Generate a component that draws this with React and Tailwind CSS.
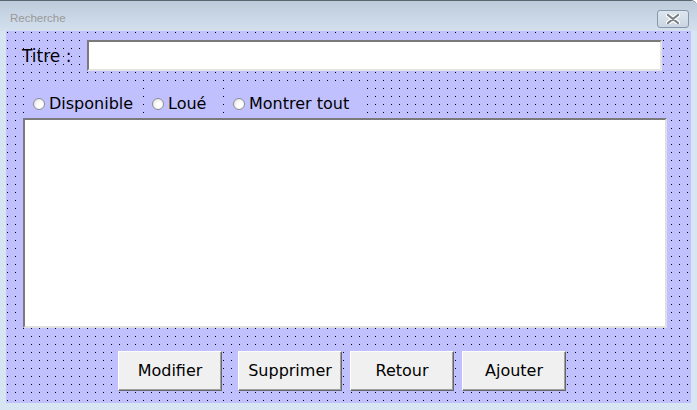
import { useState } from 'react'

const dots =
  'bg-[#c0c0ff] bg-[linear-gradient(to_bottom,transparent_1px,#c0c0ff_1px),linear-gradient(to_right,#000_1px,#c0c0ff_1px)] bg-size-[8px_8px] bg-position-[1px_1px]'

function Radio({ label, checked, onChange, width, className = '' }) {
  return (
    <label
      className={`flex h-[29px] items-center gap-[4px] bg-[#c0c0ff] pt-[3px] pl-[5px] ${className}`}
      style={{ width }}
    >
      <input type="radio" className="sr-only" checked={checked} onChange={onChange} />
      <span className="flex h-[12px] w-[12px] items-center justify-center rounded-full border border-[#8e8f8f] bg-[radial-gradient(circle_at_60%_60%,#ffffff_30%,#d8d8d8_100%)]">
        {checked && <span className="h-[4px] w-[4px] rounded-full bg-[#333]" />}
      </span>
      <span className="text-[16px] leading-none text-black">{label}</span>
    </label>
  )
}

function Btn({ children }) {
  return (
    <button className="h-[40px] w-[104px] border border-t-white border-l-white border-r-[#696969] border-b-[#696969] bg-[#f0f0f0] text-[16px] text-black shadow-[inset_-1px_-1px_0_#a0a0a0]">
      {children}
    </button>
  )
}

export default function App() {
  const [filtre, setFiltre] = useState(null)
  const [titre, setTitre] = useState('')

  return (
    <div
      className="flex h-[410px] w-[697px] flex-col overflow-hidden rounded-tr-[6px] border-t border-[#5a6670] bg-[#d7e4f2]"
      style={{ fontFamily: '"DejaVu Sans", Verdana, sans-serif' }}
    >
      {/* barre de titre */}
      <div className="flex h-[30px] shrink-0 items-start justify-between bg-[linear-gradient(to_bottom,#bccbdb,#d4e0ee)] pl-[10px] pr-[8px]">
        <span
          className="pt-[12px] text-[11.5px] leading-none text-[#9a9a9a]"
          style={{ fontFamily: '"Liberation Sans", Arial, sans-serif' }}
        >
          Recherche
        </span>
        <div className="mt-[9px] flex h-[18px] w-[32px] items-center justify-center rounded-[3px] border border-[#8797a8] bg-[linear-gradient(to_bottom,#dde6ef,#c9d5e2)]">
          <svg width="14" height="10" viewBox="0 0 14 10">
            <path d="M2 1 L12 9 M12 1 L2 9" stroke="#ffffff" strokeWidth="4.5" strokeLinecap="round" />
            <path d="M2 1 L12 9 M12 1 L2 9" stroke="#7a7f86" strokeWidth="2.2" strokeLinecap="round" />
          </svg>
        </div>
      </div>

      {/* zone cliente */}
      <div className={`mx-[6px] flex h-[372px] shrink-0 flex-col ${dots}`}>
        <div className="mt-[9px] flex h-[31px] items-center">
          <span className="ml-[16px] w-[65px] pt-[3px] text-[17px] text-black">Titre :</span>
          <input
            value={titre}
            onChange={(e) => setTitre(e.target.value)}
            className="h-[31px] w-[575px] border-2 border-t-[#7a7a7a] border-l-[#7a7a7a] border-r-[#e3e3e3] border-b-[#e3e3e3] bg-white px-1 outline-none"
          />
        </div>

        <div className="mt-[17px] ml-[22px] flex">
          <Radio label="Disponible" width={113} checked={filtre === 'dispo'} onChange={() => setFiltre('dispo')} />
          <Radio label="Loué" width={70} className="ml-[5px] pl-[6px]" checked={filtre === 'loue'} onChange={() => setFiltre('loue')} />
          <Radio label="Montrer tout" width={140} className="ml-[11px] pl-[6px]" checked={filtre === 'tout'} onChange={() => setFiltre('tout')} />
        </div>

        <div className="mt-[1px] ml-[17px] h-[210px] w-[644px] border-2 border-t-[#7a7a7a] border-l-[#7a7a7a] border-r-[#e0e0e0] border-b-[#e0e0e0] bg-white" />

        <div className="mt-[23px] ml-[112px] flex">
          <Btn>Modifier</Btn>
          <div className="ml-[16px]"><Btn>Supprimer</Btn></div>
          <div className="ml-[8px]"><Btn>Retour</Btn></div>
          <div className="ml-[8px]"><Btn>Ajouter</Btn></div>
        </div>
      </div>
    </div>
  )
}
